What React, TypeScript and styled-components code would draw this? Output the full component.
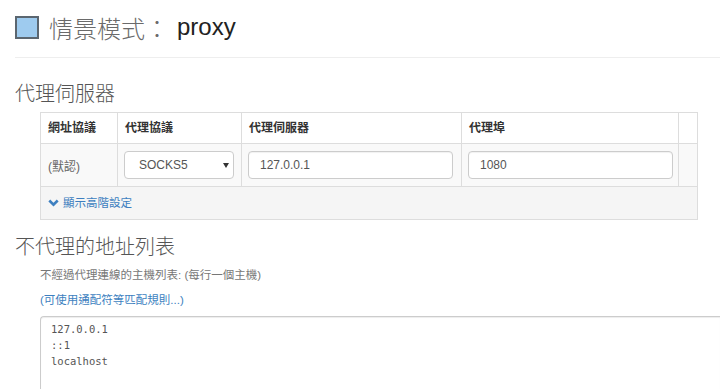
import styled, { createGlobalStyle } from "styled-components";

const GlobalStyle = createGlobalStyle`
  html, body {
    margin: 0;
    padding: 0;
    background: #fff;
    overflow: hidden;
  }
  body {
    font-family: "Liberation Sans", "Noto Sans CJK TC", sans-serif;
    color: #333;
  }
`;

export default function App() {
  return (
    <>
      <GlobalStyle />
      <Page>
        <Title>
          <ColorBox />
          <TitleLabel>情景模式：</TitleLabel>
          <TitleName>proxy</TitleName>
        </Title>
        <Divider />

        <SectionTitle>代理伺服器</SectionTitle>
        <Indented>
          <ProxyTable />
        </Indented>

        <SectionTitle $gap={15}>不代理的地址列表</SectionTitle>
        <Indented>
          <HelpText>不經過代理連線的主機列表: (每行一個主機)</HelpText>
          <Link href="#">(可使用通配符等匹配規則...)</Link>
          <BypassList
            spellCheck={false}
            defaultValue={"127.0.0.1\n::1\nlocalhost"}
          />
        </Indented>
      </Page>
    </>
  );
}

function ProxyTable() {
  return (
    <Table>
      <colgroup>
        <col style={{ width: 77 }} />
        <col style={{ width: 124 }} />
        <col style={{ width: 220 }} />
        <col style={{ width: 217 }} />
        <col style={{ width: 19 }} />
      </colgroup>
      <thead>
        <tr>
          <Th>網址協議</Th>
          <Th>代理協議</Th>
          <Th>代理伺服器</Th>
          <Th>代理埠</Th>
          <Th />
        </tr>
      </thead>
      <tbody>
        <BodyRow>
          <Td>
            <Muted>(默認)</Muted>
          </Td>
          <Td>
            <SelectWrap>
              <Select defaultValue="SOCKS5">
                <option>HTTP</option>
                <option>HTTPS</option>
                <option>SOCKS4</option>
                <option>SOCKS5</option>
              </Select>
              <Caret />
            </SelectWrap>
          </Td>
          <Td>
            <Input defaultValue="127.0.0.1" />
          </Td>
          <Td>
            <Input defaultValue="1080" />
          </Td>
          <Td />
        </BodyRow>
        <FootRow>
          <Td colSpan={5}>
            <Toggle href="#">
              <Chevron viewBox="0 0 11 8">
                <path d="M1.3 1.5 L5.5 5.7 L9.7 1.5" />
              </Chevron>
              顯示高階設定
            </Toggle>
          </Td>
        </FootRow>
      </tbody>
    </Table>
  );
}

const Page = styled.div`
  padding: 10px 0 0 15px;
`;

const Title = styled.h1`
  display: flex;
  align-items: center;
  height: 34px;
  margin: 0;
  font-size: 24px;
  font-weight: 400;
`;

const ColorBox = styled.span`
  width: 20px;
  height: 19px;
  margin-right: 10px;
  background: #9ecbef;
  border: 2px solid #5b6670;
`;

const TitleLabel = styled.span`
  color: #6a6a6a;
  font-weight: 300;
  margin-right: 8px;
`;

const TitleName = styled.span`
  color: #222;
`;

const Divider = styled.div`
  margin-top: 13px;
  border-top: 1px solid #eee;
`;

const SectionTitle = styled.h2<{ $gap?: number }>`
  margin: ${(p) => p.$gap ?? 24}px 0 0;
  font-size: 20px;
  line-height: 24px;
  font-weight: 300;
  color: #555;
`;

const Indented = styled.div`
  padding-left: 25px;
`;

const Table = styled.table`
  margin-top: 6px;
  width: 657px;
  table-layout: fixed;
  border-collapse: collapse;
  font-size: 12px;
`;

const Th = styled.th`
  border: 1px solid #ddd;
  padding: 8px 7px;
  height: 14px;
  line-height: 14px;
  text-align: left;
  font-weight: 700;
  color: #333;
`;

const BodyRow = styled.tr`
  background: #f9f9f9;
`;

const FootRow = styled.tr`
  background: #f5f5f5;
`;

const Td = styled.td`
  border: 1px solid #ddd;
  padding: 7px 7px 7px 6px;
  vertical-align: middle;
  ${FootRow} & {
    padding: 8px 7px;
    line-height: 16px;
  }
`;

const Muted = styled.span`
  color: #666;
  padding-left: 1px;
`;

const SelectWrap = styled.div`
  position: relative;
  width: 110px;
`;

const Select = styled.select`
  appearance: none;
  box-sizing: border-box;
  width: 110px;
  height: 28px;
  padding: 0 20px 0 14px;
  border: 1px solid #ccc;
  border-radius: 4px;
  background: #fff;
  font-family: "Liberation Sans", sans-serif;
  font-size: 12px;
  color: #555;
`;

const Caret = styled.span`
  position: absolute;
  right: 5px;
  top: 12px;
  border-left: 3.5px solid transparent;
  border-right: 3.5px solid transparent;
  border-top: 5px solid #333;
  pointer-events: none;
`;

const Input = styled.input`
  box-sizing: border-box;
  width: 205px;
  height: 28px;
  padding: 0 11px;
  border: 1px solid #ccc;
  border-radius: 4px;
  background: #fff;
  box-shadow: inset 0 1px 1px rgba(0, 0, 0, 0.06);
  font-family: "Liberation Sans", sans-serif;
  font-size: 12px;
  color: #555;
`;

const Toggle = styled.a`
  display: inline-flex;
  align-items: center;
  gap: 4px;
  color: #3d7fc0;
  text-decoration: none;
  font-size: 11.5px;
`;

const Chevron = styled.svg`
  width: 11px;
  height: 8px;
  fill: none;
  stroke: #3d7fc0;
  stroke-width: 2.6;
`;

const HelpText = styled.p`
  margin: 7px 0 0;
  line-height: 18px;
  font-size: 11.5px;
  color: #777;
`;

const Link = styled.a`
  display: block;
  margin-top: 7px;
  line-height: 18px;
  font-size: 11.5px;
  color: #3d7fc0;
  text-decoration: none;
`;

/* the list runs off the right and bottom edges of the window */
const BypassList = styled.textarea`
  display: block;
  box-sizing: border-box;
  margin-top: 7px;
  width: 680px;
  height: 74px;
  padding: 4px 10px;
  border: 1px solid #ccc;
  border-right: 0;
  border-bottom: 0;
  border-radius: 4px 0 0 0;
  box-shadow: inset 0 1px 1px rgba(0, 0, 0, 0.075);
  resize: none;
  overflow: hidden;
  font-family: "DejaVu Sans Mono", "Liberation Mono", monospace;
  font-size: 10.5px;
  line-height: 16px;
  color: #555;
  outline: none;
`;
